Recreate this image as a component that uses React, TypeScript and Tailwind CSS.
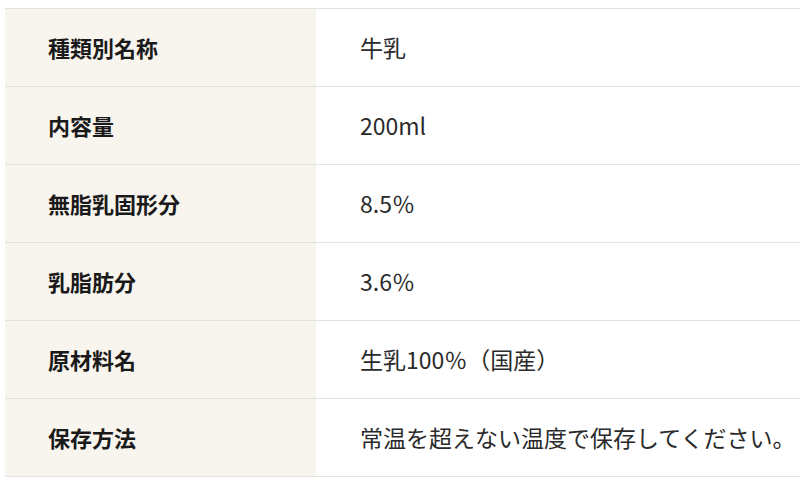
import React from 'react';

const rows: [string, string][] = [
  ['種類別名称', '牛乳'],
  ['内容量', '200ml'],
  ['無脂乳固形分', '8.5％'],
  ['乳脂肪分', '3.6％'],
  ['原材料名', '生乳100％（国産）'],
  ['保存方法', '常温を超えない温度で保存してください。'],
];

export default function App() {
  return (
    <div
      className="w-[800px] h-[482px] bg-white pt-[8px] pl-[5px] overflow-hidden"
      style={{ fontFamily: '"Noto Sans CJK JP", "Noto Sans", sans-serif' }}
    >
      <div className="border-t border-[#e2e2e2]">
        {rows.map(([label, value]) => (
          <div key={label} className="flex h-[78px] border-b border-[#e2e2e2]">
            <div className="w-[311px] shrink-0 bg-[#f8f5ee] flex items-center pl-[43px] text-[22px] font-bold text-[#1a1a1a]">
              {label}
            </div>
            <div className="flex-1 flex items-center pl-[44px] text-[23px] text-[#2a2a2a] whitespace-nowrap">
              {value}
            </div>
          </div>
        ))}
      </div>
    </div>
  );
}
